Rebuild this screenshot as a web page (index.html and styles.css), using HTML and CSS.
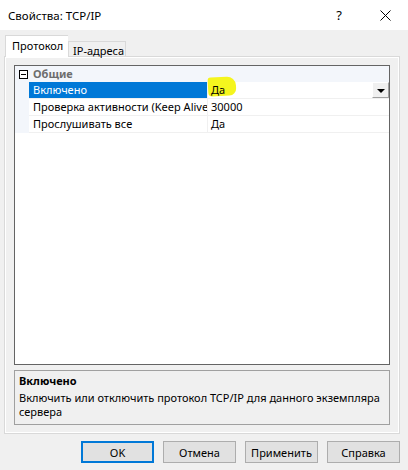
FILE: index.html
```html
<!DOCTYPE html>
<html lang="ru">
<head>
<meta charset="utf-8">
<title>Свойства: TCP/IP</title>
<link rel="stylesheet" href="styles.css">
</head>
<body>
<div class="window">
  <div class="titlebar">
    <div class="title">Свойства: TCP/IP</div>
    <div class="ctrl help">?</div>
    <div class="ctrl close">
      <svg width="11" height="11" viewBox="0 0 11 11"><path d="M0.5 0.5 L10.5 10.5 M10.5 0.5 L0.5 10.5" stroke="#000" stroke-width="1" fill="none"/></svg>
    </div>
  </div>
  <div class="tabs">
    <div class="tab active">Протокол</div>
    <div class="tab">IP-адреса</div>
  </div>
  <div class="panel">
    <div class="grid">
      <div class="cat">
        <div class="gut"><span class="box"></span></div>
        <div class="cat-name">Общие</div>
      </div>
      <div class="row">
        <div class="gut"></div>
        <div class="name sel">Включено</div>
        <div class="val"><span class="mark"></span><span class="txt">Да</span><span class="drop"><span class="tri"></span></span></div>
      </div>
      <div class="row">
        <div class="gut"></div>
        <div class="name">Проверка активности (Keep Alive)</div>
        <div class="val"><span class="txt">30000</span></div>
      </div>
      <div class="row">
        <div class="gut"></div>
        <div class="name">Прослушивать все</div>
        <div class="val"><span class="txt">Да</span></div>
      </div>
    </div>
    <div class="desc">
      <div class="desc-title">Включено</div>
      <div class="desc-text">Включить или отключить протокол TCP/IP для данного экземпляра сервера</div>
    </div>
  </div>
  <div class="buttons">
    <div class="btn default">OK</div>
    <div class="btn">Отмена</div>
    <div class="btn">Применить</div>
    <div class="btn">Справка</div>
  </div>
</div>
</body>
</html>
```
FILE: styles.css
```css
* { box-sizing: border-box; }
html, body { margin: 0; padding: 0; }
body {
  width: 408px;
  height: 470px;
  overflow: hidden;
  background: #f0f0f0;
  font-family: "Noto Sans", "Open Sans", sans-serif;
  font-size: 11px;
  color: #000;
}
.window { display: flex; flex-direction: column; height: 470px; }
.titlebar {
  height: 30px;
  background: #fff;
  display: flex;
  align-items: center;
}
.title { flex: 1; padding-left: 8px; font-size: 11.5px; }
.ctrl {
  width: 46px;
  height: 30px;
  display: flex;
  align-items: center;
  justify-content: center;
}
.help { font-size: 13px; }
.tabs {
  height: 26px;
  display: flex;
  align-items: flex-end;
  padding-left: 5px;
  position: relative;
  z-index: 2;
}
.tab {
  white-space: nowrap;
  border: 1px solid #d9d9d9;
  border-bottom: none;
}
.tab.active {
  height: 22px;
  width: 63px;
  padding: 0 0 0 6px;
  background: #fff;
  line-height: 20px;
  margin-bottom: -1px;
  border-right: none;
}
.tab:not(.active) {
  height: 15px;
  width: 58px;
  padding-left: 4px;
  background: #f0f0f0;
  line-height: 17px;
  overflow: visible;
}
.panel {
  margin: 0 8px 0 4px;
  height: 378px;
  border: 1px solid #d9d9d9;
  box-shadow: inset 0 0 0 1px #fff;
  padding: 8px 9px;
  display: flex;
  flex-direction: column;
  gap: 5px;
}
.grid {
  height: 300px;
  border: 1px solid #646464;
  background: #fff;
  display: flex;
  flex-direction: column;
}
.cat {
  height: 16px;
  display: flex;
  background: #f3f6fb;
}
.gut {
  width: 14px;
  flex: none;
  background: #f3f6fb;
  display: flex;
  justify-content: center;
  align-items: center;
}
.box {
  width: 9px;
  height: 9px;
  border: 1px solid #000;
  background: #fff;
  position: relative;
  margin-left: 2px;
  margin-top: 1px;
}
.box::after {
  content: "";
  position: absolute;
  left: 1px;
  top: 3px;
  width: 5px;
  height: 1px;
  background: #000;
}
.cat-name {
  padding-left: 4px;
  font-weight: bold;
  color: #6d6d6d;
  line-height: 16px;
}
.row {
  height: 17px;
  display: flex;
}
.name {
  width: 178px;
  flex: none;
  padding-left: 4px;
  line-height: 16px;
  border-bottom: 1px solid #f0f0f0;
  white-space: nowrap;
  overflow: hidden;
}
.name.sel { background: #0078d7; color: #fff; }
.val {
  flex: 1;
  display: flex;
  border-left: 1px solid #f0f0f0;
  border-bottom: 1px solid #f0f0f0;
  padding-left: 3px;
  line-height: 16px;
  position: relative;
}
.txt { position: relative; z-index: 1; }
.mark {
  position: absolute;
  left: 0;
  top: -5px;
  width: 28px;
  height: 19px;
  background: #f5f51e;
  border-radius: 3px 9px 7px 4px;
  transform: rotate(-3deg);
}
.drop {
  margin-left: auto;
  width: 17px;
  height: 16px;
  background: #f0f0f0;
  border: 1px solid;
  border-color: #fff #a0a0a0 #a0a0a0 #fff;
  display: flex;
  align-items: center;
  justify-content: center;
}
.tri {
  width: 0;
  height: 0;
  border-left: 4px solid transparent;
  border-right: 4px solid transparent;
  border-top: 4px solid #000;
  margin-top: 1px;
}
.desc {
  height: 55px;
  border: 1px solid #a0a0a0;
  padding: 2px 4px;
}
.desc-title { font-weight: bold; line-height: 16px; }
.desc-text { line-height: 14px; margin-top: 2px; }
.buttons {
  display: flex;
  justify-content: flex-end;
  gap: 9px;
  padding: 7px 8px 0 0;
}
.btn {
  width: 73px;
  height: 22px;
  background: #e1e1e1;
  border: 1px solid #adadad;
  display: flex;
  align-items: center;
  justify-content: center;
}
.btn.default { border: 2px solid #0078d7; }
```
